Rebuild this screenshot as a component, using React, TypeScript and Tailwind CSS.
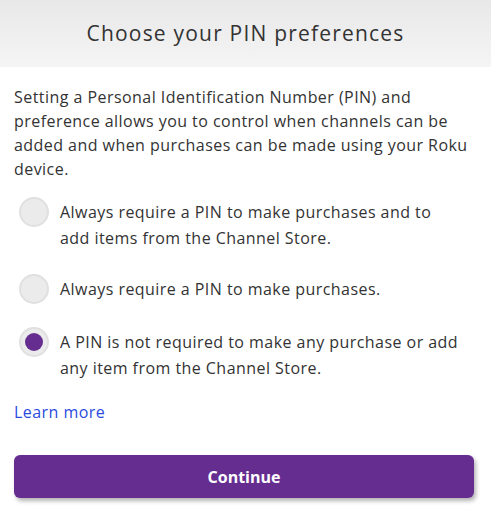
const options = [
  "Always require a PIN to make purchases and to add items from the Channel Store.",
  "Always require a PIN to make purchases.",
  "A PIN is not required to make any purchase or add any item from the Channel Store.",
];

export default function App() {
  const selected = 2;
  return (
    <div
      className="w-[491px] h-[525px] bg-white text-[#333333]"
      style={{ fontFamily: '"Open Sans", "Liberation Sans", sans-serif' }}
    >
      {/* header */}
      <div className="h-[67px] flex items-center justify-center bg-gradient-to-b from-[#e8e8e8] to-[#f5f5f5]">
        <h1 className="text-[21px] tracking-[1.2px] text-[#333333]">Choose your PIN preferences</h1>
      </div>

      <div className="px-[14px] pt-[18px]">
        <p className="text-[16px] leading-[24px] tracking-[0.45px] w-[466px]">
          Setting a Personal Identification Number (PIN) and preference allows you to control when channels can be
          added and when purchases can be made using your Roku device.
        </p>

        <div className="mt-[18px] flex flex-col gap-[25px]">
          {options.map((label, i) => (
            <label key={i} className="flex items-start gap-[11px] pl-[5px]">
              <span className="-mt-[2px] w-[30px] h-[30px] shrink-0 rounded-full bg-[#ebebeb] border-2 border-[#e0e0e0] flex items-center justify-center">
                {i === selected && <span className="w-[18px] h-[18px] rounded-full bg-[#662d91]" />}
              </span>
              <span className="text-[16px] leading-[26px] tracking-[0.45px] w-[402px]">{label}</span>
            </label>
          ))}
        </div>

        <a className="block mt-[19px] text-[16px] leading-[24px] tracking-[0.45px] text-[#2b4be0]">Learn more</a>

        <button className="mt-[31px] w-[460px] h-[43px] rounded-[6px] bg-[#662d91] text-white font-bold text-[16px] shadow-[2px_3px_4px_rgba(0,0,0,0.3)]">
          Continue
        </button>
      </div>
    </div>
  );
}
